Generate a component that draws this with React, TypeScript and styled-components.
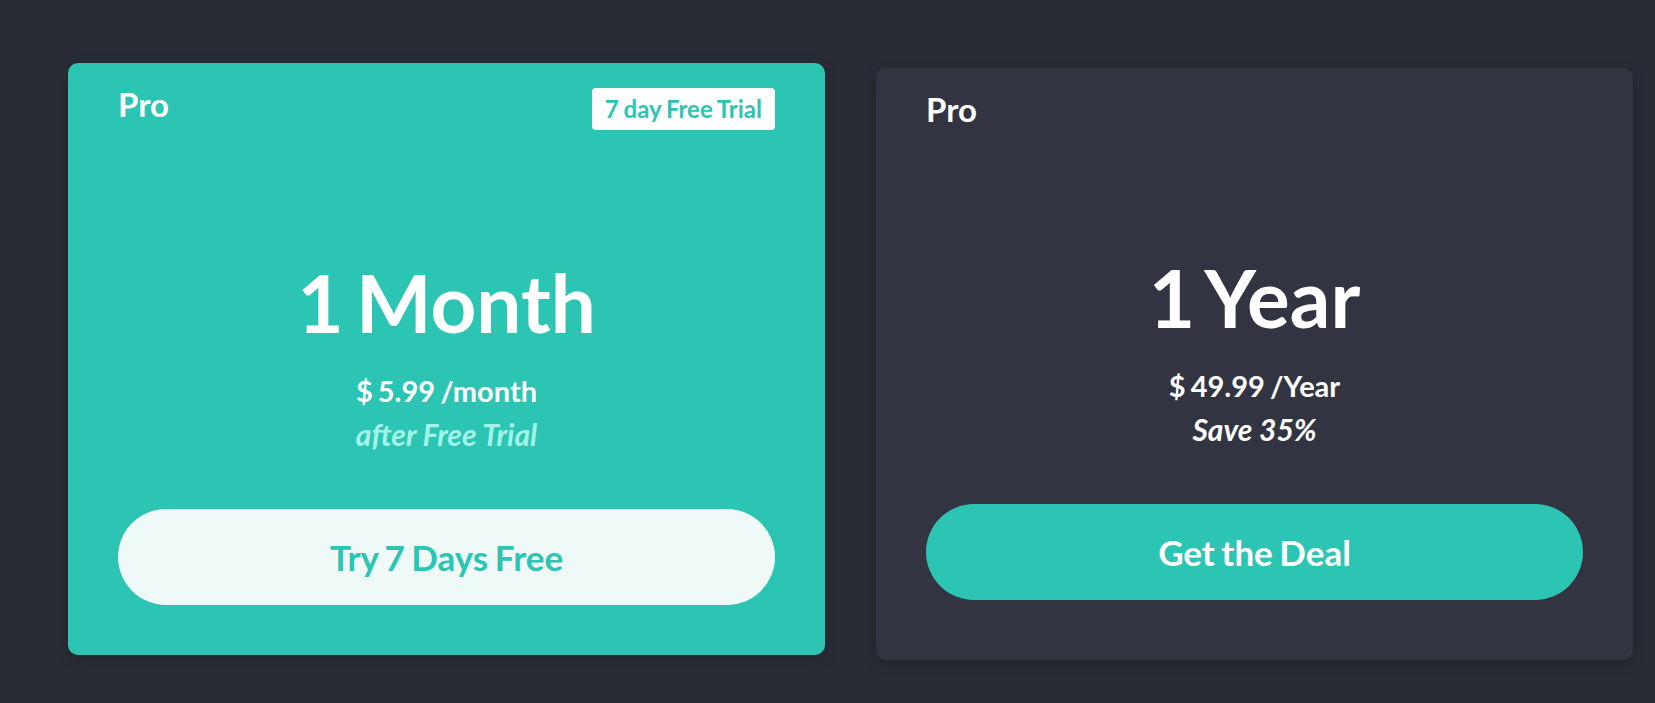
import React, { FC } from "react";
import styled, { createGlobalStyle } from "styled-components";

const GlobalStyle = createGlobalStyle`
  html, body {
    margin: 0;
    padding: 0;
    background: #2a2c35;
    font-family: Lato, "Open Sans", sans-serif;
  }
`;

const Page = styled.div`
  display: flex;
  align-items: stretch;
  gap: 51px;
  padding: 68px 0 44px 68px;
  min-height: 703px;
  box-sizing: border-box;
`;

const Card = styled.div<{ featured: boolean }>`
  width: 757px;
  box-sizing: border-box;
  padding: 25px 50px 50px;
  border-radius: 10px;
  display: flex;
  flex-direction: column;
  color: #ffffff;
  background: ${(p) => (p.featured ? "#2cc5b3" : "#323541")};
  box-shadow: 0 4px 14px rgba(0, 0, 0, 0.18);
  ${(p) => p.featured && "transform: translateY(-5px);"}
`;

const Header = styled.div`
  display: flex;
  justify-content: space-between;
  align-items: flex-start;
`;

const Plan = styled.span`
  font-size: 33px;
  line-height: 32px;
  font-weight: 700;
`;

const Badge = styled.span`
  background: #ffffff;
  color: #2cc5b3;
  font-size: 24px;
  line-height: 26px;
  font-weight: 700;
  padding: 8px 13px;
  border-radius: 4px;
  word-spacing: -1px;
`;

const Term = styled.div`
  margin-top: 132px;
  text-align: center;
  font-size: 80px;
  line-height: 80px;
  font-weight: 700;
  word-spacing: -7px;
`;

const Price = styled.div`
  margin-top: 32px;
  text-align: center;
  font-size: 29px;
  line-height: 1.2;
  font-weight: 700;
  word-spacing: -2px;
`;

const Note = styled.div<{ featured: boolean }>`
  margin-top: 7px;
  text-align: center;
  font-size: 30px;
  line-height: 36px;
  font-weight: 700;
  font-style: italic;
  color: ${(p) => (p.featured ? "#a4f4ea" : "#ffffff")};
`;

const Action = styled.button<{ featured: boolean }>`
  all: unset;
  margin-top: 57px;
  height: 96px;
  border-radius: 48px;
  text-align: center;
  font-family: Lato, "Open Sans", sans-serif;
  font-size: 35px;
  line-height: 96px;
  font-weight: 700;
  word-spacing: -2px;
  cursor: pointer;
  background: ${(p) => (p.featured ? "#effaf8" : "#2cc5b3")};
  color: ${(p) => (p.featured ? "#2cc5b3" : "#ffffff")};
`;

interface Offer {
  term: string;
  price: string;
  note: string;
  action: string;
  badge?: string;
  featured: boolean;
}

const offers: Offer[] = [
  {
    term: "1 Month",
    price: "$ 5.99 /month",
    note: "after Free Trial",
    action: "Try 7 Days Free",
    badge: "7 day Free Trial",
    featured: true,
  },
  {
    term: "1 Year",
    price: "$ 49.99 /Year",
    note: "Save 35%",
    action: "Get the Deal",
    featured: false,
  },
];

const OfferCard: FC<{ offer: Offer }> = ({ offer }) => (
  <Card featured={offer.featured}>
    <Header>
      <Plan>Pro</Plan>
      {offer.badge && <Badge>{offer.badge}</Badge>}
    </Header>
    <Term>{offer.term}</Term>
    <Price>{offer.price}</Price>
    <Note featured={offer.featured}>{offer.note}</Note>
    <Action featured={offer.featured}>{offer.action}</Action>
  </Card>
);

export default function App() {
  return (
    <>
      <GlobalStyle />
      <Page>
        {offers.map((o) => (
          <OfferCard key={o.term} offer={o} />
        ))}
      </Page>
    </>
  );
}
